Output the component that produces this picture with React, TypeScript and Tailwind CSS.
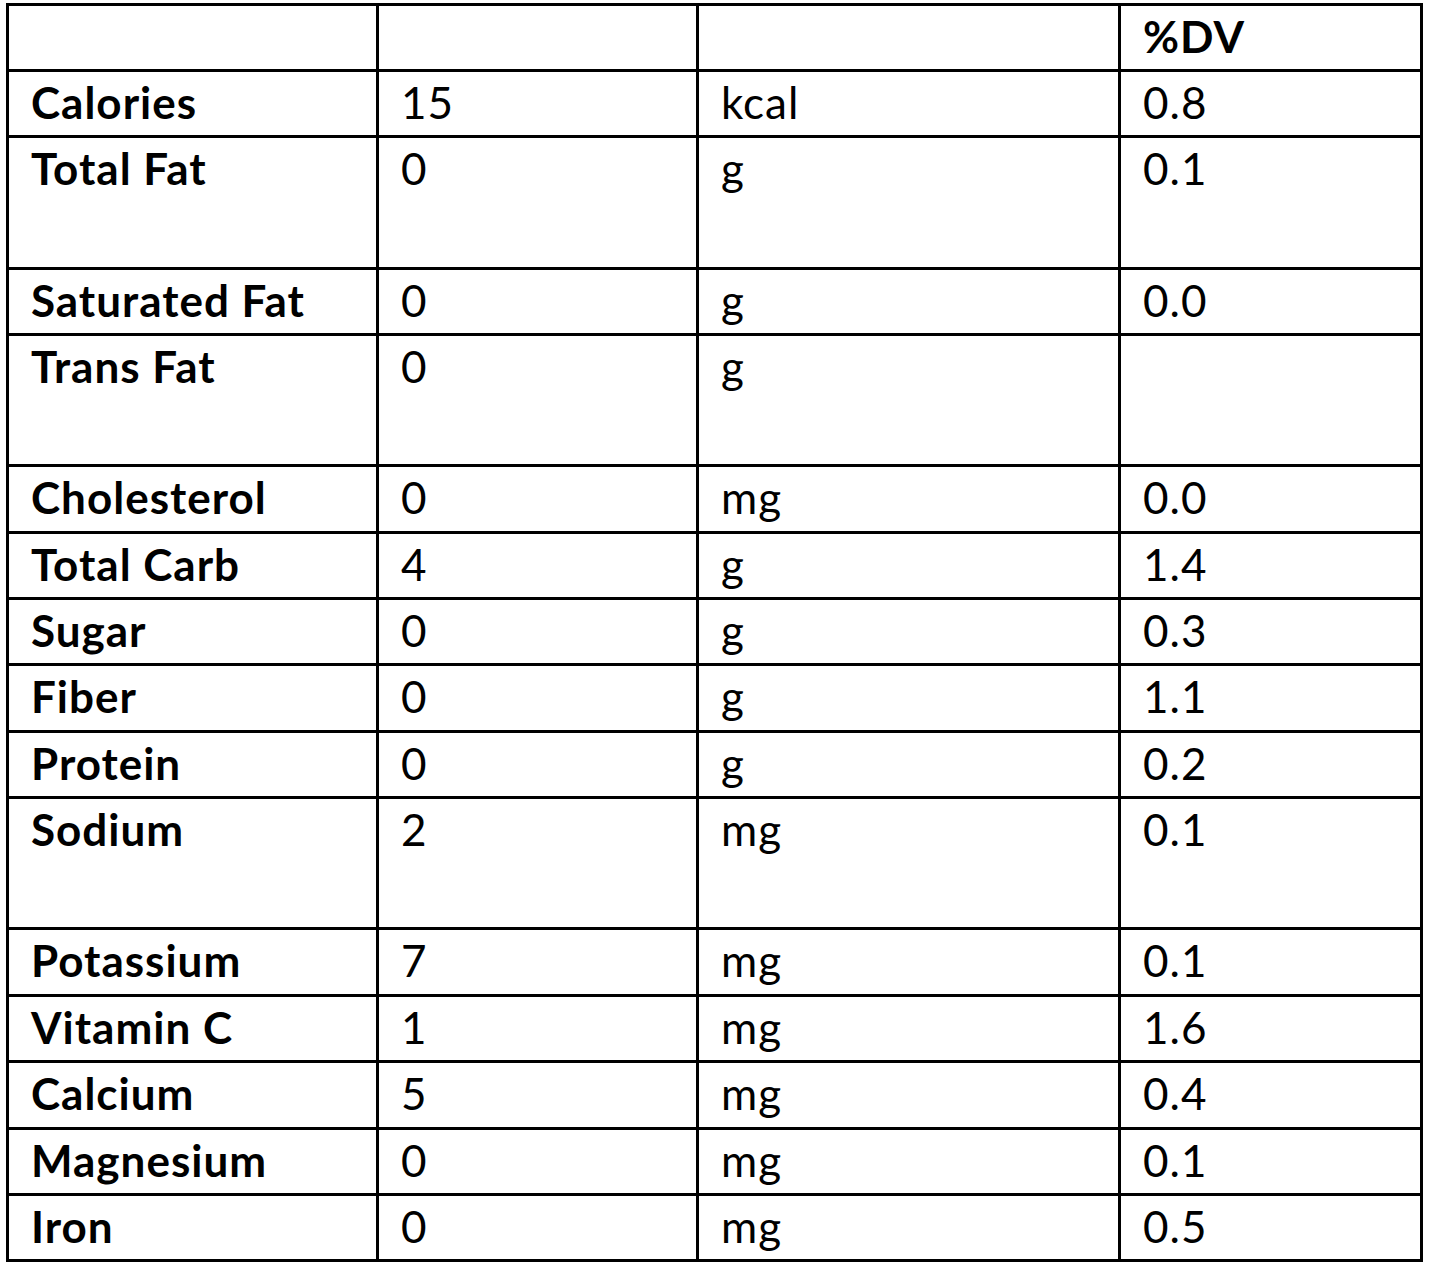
import React from "react";

type Row = { name: string; amt: string; unit: string; dv: string; h: string };

const rows: Row[] = [
  { name: "Calories", amt: "15", unit: "kcal", dv: "0.8", h: "h-[66px]" },
  { name: "Total Fat", amt: "0", unit: "g", dv: "0.1", h: "h-[132px]" },
  { name: "Saturated Fat", amt: "0", unit: "g", dv: "0.0", h: "h-[66px]" },
  { name: "Trans Fat", amt: "0", unit: "g", dv: "", h: "h-[131px]" },
  { name: "Cholesterol", amt: "0", unit: "mg", dv: "0.0", h: "h-[67px]" },
  { name: "Total Carb", amt: "4", unit: "g", dv: "1.4", h: "h-[66px]" },
  { name: "Sugar", amt: "0", unit: "g", dv: "0.3", h: "h-[66px]" },
  { name: "Fiber", amt: "0", unit: "g", dv: "1.1", h: "h-[67px]" },
  { name: "Protein", amt: "0", unit: "g", dv: "0.2", h: "h-[66px]" },
  { name: "Sodium", amt: "2", unit: "mg", dv: "0.1", h: "h-[131px]" },
  { name: "Potassium", amt: "7", unit: "mg", dv: "0.1", h: "h-[67px]" },
  { name: "Vitamin C", amt: "1", unit: "mg", dv: "1.6", h: "h-[66px]" },
  { name: "Calcium", amt: "5", unit: "mg", dv: "0.4", h: "h-[67px]" },
  { name: "Magnesium", amt: "0", unit: "mg", dv: "0.1", h: "h-[66px]" },
  { name: "Iron", amt: "0", unit: "mg", dv: "0.5", h: "h-[66px]" },
];

const cell = "border-r-[3px] border-b-[3px] border-black pl-[22px] pt-[8px] leading-none tracking-[1px]";

export default function App() {
  return (
    <div className="bg-white w-[1430px] h-[1262px] pt-[3px] pl-[6px] text-black" style={{ fontFamily: "Lato, 'Liberation Sans', sans-serif" }}>
      <div className="border-l-[3px] border-t-[3px] border-black w-[1417px] text-[44px]">
        <div className="grid grid-cols-[370px_320px_422px_302px] h-[66px]">
          <div className={cell}></div>
          <div className={cell}></div>
          <div className={cell}></div>
          <div className={cell + " font-bold"}>%DV</div>
        </div>
        {rows.map((r) => (
          <div key={r.name} className={"grid grid-cols-[370px_320px_422px_302px] " + r.h}>
            <div className={cell + " font-bold"}>{r.name}</div>
            <div className={cell}>{r.amt}</div>
            <div className={cell}>{r.unit}</div>
            <div className={cell}>{r.dv}</div>
          </div>
        ))}
      </div>
    </div>
  );
}
